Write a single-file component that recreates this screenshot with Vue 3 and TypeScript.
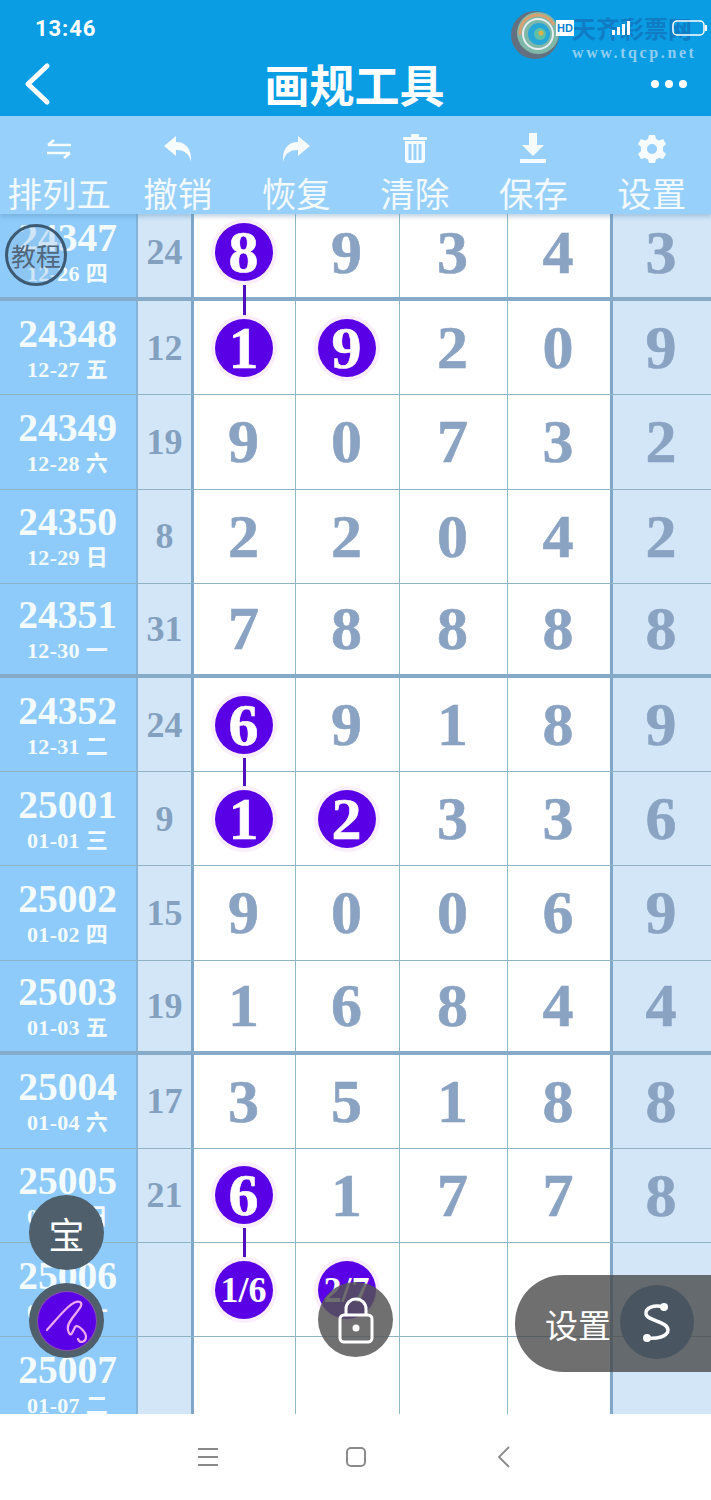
<script setup lang="ts">
interface Ball { text: string; small?: boolean; link?: boolean }
interface Row { id: string; date: string; n: string; cells: (string | Ball)[]; last: string; thick?: boolean }

const tools = ['排列五', '撤销', '恢复', '清除', '保存', '设置']

const rows: Row[] = [
  { id: '24347', date: '12-26 四', n: '24', cells: [{ text: '8', link: true }, '9', '3', '4'], last: '3', thick: true },
  { id: '24348', date: '12-27 五', n: '12', cells: [{ text: '1' }, { text: '9' }, '2', '0'], last: '9' },
  { id: '24349', date: '12-28 六', n: '19', cells: ['9', '0', '7', '3'], last: '2' },
  { id: '24350', date: '12-29 日', n: '8', cells: ['2', '2', '0', '4'], last: '2' },
  { id: '24351', date: '12-30 一', n: '31', cells: ['7', '8', '8', '8'], last: '8', thick: true },
  { id: '24352', date: '12-31 二', n: '24', cells: [{ text: '6', link: true }, '9', '1', '8'], last: '9' },
  { id: '25001', date: '01-01 三', n: '9', cells: [{ text: '1' }, { text: '2' }, '3', '3'], last: '6' },
  { id: '25002', date: '01-02 四', n: '15', cells: ['9', '0', '0', '6'], last: '9' },
  { id: '25003', date: '01-03 五', n: '19', cells: ['1', '6', '8', '4'], last: '4', thick: true },
  { id: '25004', date: '01-04 六', n: '17', cells: ['3', '5', '1', '8'], last: '8' },
  { id: '25005', date: '01-05 日', n: '21', cells: [{ text: '6', link: true }, '1', '7', '7'], last: '8' },
  { id: '25006', date: '01-06 一', n: '', cells: [{ text: '1/6', small: true }, { text: '2/7', small: true }, '', ''], last: '' },
  { id: '25007', date: '01-07 二', n: '', cells: ['', '', '', ''], last: '' }
]

const isBall = (c: string | Ball): c is Ball => typeof c !== 'string'
</script>

<template>
  <div class="page">
    <header class="top">
      <div class="status">13:46</div>
      <div class="title-bar">
        <svg class="back" width="30" height="44" viewBox="0 0 30 44"><path d="M25 4 L6 22 L25 40" fill="none" stroke="#fff" stroke-width="5" stroke-linecap="round" stroke-linejoin="round" /></svg>
        <h1 class="title">画规工具</h1>
        <div class="more"><i></i><i></i><i></i></div>
      </div>
      <div class="mark">
        <svg width="52" height="52" viewBox="0 0 52 52">
          <circle cx="25" cy="26" r="24" fill="#62707f" />
          <circle cx="28" cy="24" r="21" fill="#7fb7a8" />
          <path d="M10 26A18 18 0 0 1 44 16" fill="none" stroke="#d8a070" stroke-width="3" />
          <circle cx="28" cy="25" r="15" fill="none" stroke="#e6eef0" stroke-width="2" />
          <circle cx="29" cy="25" r="11" fill="#27a6d8" />
          <circle cx="30" cy="25" r="6" fill="#5fc0a8" />
          <circle cx="31" cy="24" r="2.500" fill="#d9b24c" />
        </svg>
        <div class="mark-text">
          <span class="mark-cn">天齐彩票网</span>
          <span class="mark-url">www.tqcp.net</span>
        </div>
        <div class="sys-icons">
          <span class="hd">HD</span>
          <svg width="26" height="16" viewBox="0 0 26 16" fill="#fff"><rect x="2" y="10" width="3" height="5" /><rect x="7" y="7" width="3" height="8" /><rect x="12" y="4" width="3" height="11" /><rect x="17" y="1" width="3" height="14" /></svg>
          <svg width="36" height="16" viewBox="0 0 36 16"><rect x="1" y="1" width="31" height="14" rx="4" fill="none" stroke="#fff" stroke-width="1.500" /><rect x="33" y="5" width="2" height="6" fill="#fff" /></svg>
        </div>
      </div>
    </header>

    <nav class="tools">
      <div v-for="(t, i) in tools" :key="t" class="tool">
        <svg class="tool-icon" width="36" height="36" viewBox="0 0 36 36" fill="#fff">
          <g v-if="i === 0" fill="none" stroke="#fff" stroke-width="2.600">
            <path d="M7 14H30M7 14L13 9" />
            <path d="M29 22H6M29 22L23 27" />
          </g>
          <path v-else-if="i === 1" d="M16 5 L4 15 L16 25 V19 C24 19 29 22 31 31 C32 18 26 11 16 11 Z" />
          <path v-else-if="i === 2" d="M20 5 L32 15 L20 25 V19 C12 19 7 22 5 31 C4 18 10 11 20 11 Z" />
          <g v-else-if="i === 3">
            <rect x="14" y="3" width="8" height="3" rx="1" />
            <rect x="6" y="6" width="24" height="3" rx="1" />
            <path fill-rule="evenodd" d="M8 10H28V29Q28 32 25 32H11Q8 32 8 29ZM11.500 13V29H14.500V13ZM16.500 13V29H19.500V13ZM21.500 13V29H24.500V13Z" />
          </g>
          <g v-else-if="i === 4">
            <path d="M14 2H22V14H29L18 25L7 14H14Z" />
            <rect x="5" y="28" width="26" height="4" />
          </g>
          <g v-else>
            <path fill-rule="evenodd" d="M15 4H21L22 8L25 9.500L29 8L32 13L29 16V20L32 23L29 28L25 27L22 28.500L21 32H15L14 28.500L11 27L7 28L4 23L7 20V16L4 13L7 8L11 9.500L14 8ZM18 13A5 5 0 1 0 18 23A5 5 0 1 0 18 13Z" />
          </g>
        </svg>
        <span class="tool-label">{{ t }}</span>
      </div>
    </nav>

    <main class="board">
      <div v-for="r in rows" :key="r.id" class="row" :class="{ thick: r.thick }">
        <div class="issue">
          <span class="issue-id">{{ r.id }}</span>
          <span class="issue-date">{{ r.date }}</span>
        </div>
        <div class="sum">{{ r.n }}</div>
        <div v-for="(c, i) in r.cells" :key="i" class="cell">
          <template v-if="isBall(c)">
            <span class="ball" :class="{ small: c.small }">{{ c.text }}</span>
            <span v-if="c.link" class="link"></span>
          </template>
          <template v-else>{{ c }}</template>
        </div>
        <div class="cell last">{{ r.last }}</div>
      </div>
    </main>

    <footer class="sys">
      <svg width="22" height="20" viewBox="0 0 22 20"><path d="M1 2H21M1 10H21M1 18H21" stroke="#8a8a8a" stroke-width="1.800" /></svg>
      <svg width="22" height="22" viewBox="0 0 22 22"><rect x="2" y="2" width="18" height="18" rx="4" fill="none" stroke="#8a8a8a" stroke-width="2" /></svg>
      <svg width="16" height="24" viewBox="0 0 16 24"><path d="M13 2L3 12L13 22" fill="none" stroke="#8a8a8a" stroke-width="1.800" /></svg>
    </footer>

    <div class="tutorial">教程</div>
    <div class="float bao">宝</div>
    <div class="float pen">
      <span class="pen-in">
        <svg width="58" height="58" viewBox="0 0 58 58"><path d="M9 38C20 26 34 7 42 10C49 14 27 28 30 38C32 46 34 42 37 35C40 32 48 40 48 45C48 50 42 52 40 47" fill="none" stroke="#f0a8f0" stroke-width="2.200" stroke-linecap="round" /></svg>
      </span>
    </div>
    <div class="float lock">
      <svg width="40" height="48" viewBox="0 0 40 48"><path d="M10 20V13A10 10 0 0 1 30 13V20" fill="none" stroke="#fff" stroke-width="3" /><rect x="4" y="19" width="32" height="27" rx="4" fill="none" stroke="#fff" stroke-width="3" /><circle cx="20" cy="32" r="3.500" fill="#fff" /></svg>
    </div>
    <div class="pill">
      <span class="pill-text">设置</span>
      <span class="pill-s">
        <svg width="34" height="46" viewBox="0 0 34 46"><path d="M24 8C14 5 5 9 6 15C7 22 28 22 28 31C28 38 16 40 7 39" fill="none" stroke="#fff" stroke-width="3.500" stroke-linecap="round" /><circle cx="24" cy="8" r="4" fill="#fff" /><circle cx="7" cy="39" r="4" fill="#fff" /></svg>
      </span>
    </div>
  </div>
</template>

<style scoped>
.page {
  position: relative;
  display: flex;
  flex-direction: column;
  width: 711px;
  height: 1500px;
  overflow: hidden;
  background: #fff;
  font-family: "Noto Sans CJK SC", "Noto Sans", sans-serif;
}
.top {
  position: relative;
  flex: 0 0 116px;
  background: #0a9de4;
  color: #fff;
}
.status {
  padding: 16px 0 0 35px;
  height: 26px;
  font: 700 22px/26px "Roboto", sans-serif;
  letter-spacing: 0.900px;
}
.title-bar {
  display: flex;
  align-items: center;
  justify-content: space-between;
  padding: 12px 24px 0 22px;
  height: 60px;
}
.title {
  margin: 0 0 0 6px;
  font-size: 45px;
  line-height: 60px;
  font-weight: 700;
}
.more {
  display: flex;
  gap: 6px;
}
.more i {
  width: 8px;
  height: 8px;
  border-radius: 50%;
  background: #fff;
}
.mark {
  position: absolute;
  top: 9px;
  left: 510px;
  display: flex;
  gap: 10px;
}
.mark-text {
  display: flex;
  flex-direction: column;
  padding-top: 5px;
}
.mark-cn {
  font-size: 24px;
  line-height: 28px;
  font-weight: 700;
  color: #0f7cc4;
  white-space: nowrap;
}
.mark-url {
  margin-top: 2px;
  font: 700 16px/18px "Liberation Serif", serif;
  letter-spacing: 2.600px;
  color: #8fcdf0;
  white-space: nowrap;
}
.sys-icons {
  position: absolute;
  left: 46px;
  top: 11px;
  display: flex;
  align-items: center;
  gap: 36px;
}
.hd {
  padding: 0 1px;
  font: 700 11px/16px "Liberation Sans", sans-serif;
  color: #0a7fd0;
  background: #fff;
}
.tools {
  position: relative;
  z-index: 2;
  display: grid;
  grid-template-columns: repeat(6, 1fr);
  flex: 0 0 98px;
  background: #97d0fa;
  box-shadow: 0 3px 4px rgba(90, 140, 180, 0.35);
}
.tool {
  display: flex;
  flex-direction: column;
  align-items: center;
  padding-top: 15px;
  color: #f2f9ff;
}
.tool-icon {
  opacity: 0.92;
}
.tool-label {
  margin-top: 3px;
  font-size: 34.500px;
  line-height: 44px;
  white-space: nowrap;
}
.board {
  flex: 1;
  margin-top: -7px;
  min-height: 0;
  overflow: hidden;
}
.row {
  display: grid;
  grid-template-columns: 136px 58px 102px 104px 108px 105px 98px;
  height: 94.200px;
  box-sizing: border-box;
  border-bottom: 1px solid #8db3c4;
}
.row.thick {
  border-bottom: 4px solid #86abc9;
}
.issue {
  display: flex;
  flex-direction: column;
  align-items: center;
  justify-content: center;
  padding-right: 1px;
  background: #8ecbfa;
  color: #f4fbff;
  font-family: "Liberation Serif", "Noto Sans CJK SC", serif;
  font-weight: 700;
}
.issue-id {
  font-size: 39.500px;
  line-height: 44px;
}
.issue-date {
  font-size: 22px;
  line-height: 28px;
  letter-spacing: 0.300px;
  white-space: nowrap;
}
.sum,
.cell {
  display: flex;
  align-items: center;
  justify-content: center;
  font-family: "Liberation Serif", serif;
  font-weight: 700;
  color: #8aa3c2;
}
.sum {
  background: #d2e6f8;
  border-left: 2px solid #84b4d8;
  border-right: 3px solid #7fa8c8;
  font-size: 36px;
  color: #83a0bf;
}
.cell {
  position: relative;
  padding-right: 2px;
  font-size: 62px;
  -webkit-text-stroke: 0.600px currentColor;
  border-right: 1px solid #8db8c6;
  background: #fff;
}
.cell:nth-last-child(2) {
  border-right: 3px solid #7fa8c8;
}
.cell.last {
  background: #d2e6f8;
  border-right: 0;
}
.ball {
  position: relative;
  z-index: 1;
  display: flex;
  align-items: center;
  justify-content: center;
  width: 58px;
  height: 58px;
  border-radius: 50%;
  background: #5a00e6;
  box-shadow: 0 0 0 4px #fbeefb;
  color: #fff;
  font-size: 60px;
  line-height: 1;
}
.ball.small {
  font-size: 36px;
  -webkit-text-stroke: 0;
}
.link {
  position: absolute;
  left: 50%;
  top: calc(50% + 33px);
  width: 3px;
  height: 32px;
  margin-left: -1.500px;
  background: #4f10c0;
  z-index: 1;
}
.sys {
  flex: 0 0 86px;
  display: grid;
  grid-template-columns: repeat(3, 148px);
  place-items: center;
  justify-content: center;
  background: #fff;
}
.tutorial {
  position: absolute;
  z-index: 5;
  left: 5px;
  top: 224px;
  width: 62px;
  height: 62px;
  box-sizing: border-box;
  display: flex;
  align-items: center;
  justify-content: center;
  border: 3px solid #3e5a72;
  border-radius: 50%;
  color: #52677c;
  font-size: 25px;
  font-weight: 400;
  white-space: nowrap;
  background: rgba(140, 190, 230, 0.35);
}
.float {
  position: absolute;
  z-index: 5;
  display: flex;
  align-items: center;
  justify-content: center;
  width: 75px;
  height: 75px;
  border-radius: 50%;
  color: #fff;
}
.bao {
  left: 29px;
  top: 1195px;
  background: #4f5f6c;
  font-size: 36px;
}
.pen {
  left: 29px;
  top: 1283px;
  background: #4f5f6c;
}
.pen-in {
  display: flex;
  width: 58px;
  height: 58px;
  border-radius: 50%;
  background: #5a00e6;
  box-shadow: 0 0 0 1px #8a4fb0;
}
.lock {
  left: 318px;
  top: 1282px;
  background: rgba(85, 85, 85, 0.84);
}
.pill {
  position: absolute;
  z-index: 5;
  left: 515px;
  top: 1275px;
  width: 196px;
  height: 97px;
  display: flex;
  align-items: center;
  padding-left: 30px;
  box-sizing: border-box;
  border-radius: 48px 0 0 48px;
  background: rgba(70, 70, 70, 0.78);
  color: #fff;
}
.pill-text {
  font-size: 33px;
  white-space: nowrap;
}
.pill-s {
  position: absolute;
  left: 105px;
  top: 10px;
  width: 74px;
  height: 74px;
  display: flex;
  align-items: center;
  justify-content: center;
  border-radius: 50%;
  background: #495661;
}
</style>
